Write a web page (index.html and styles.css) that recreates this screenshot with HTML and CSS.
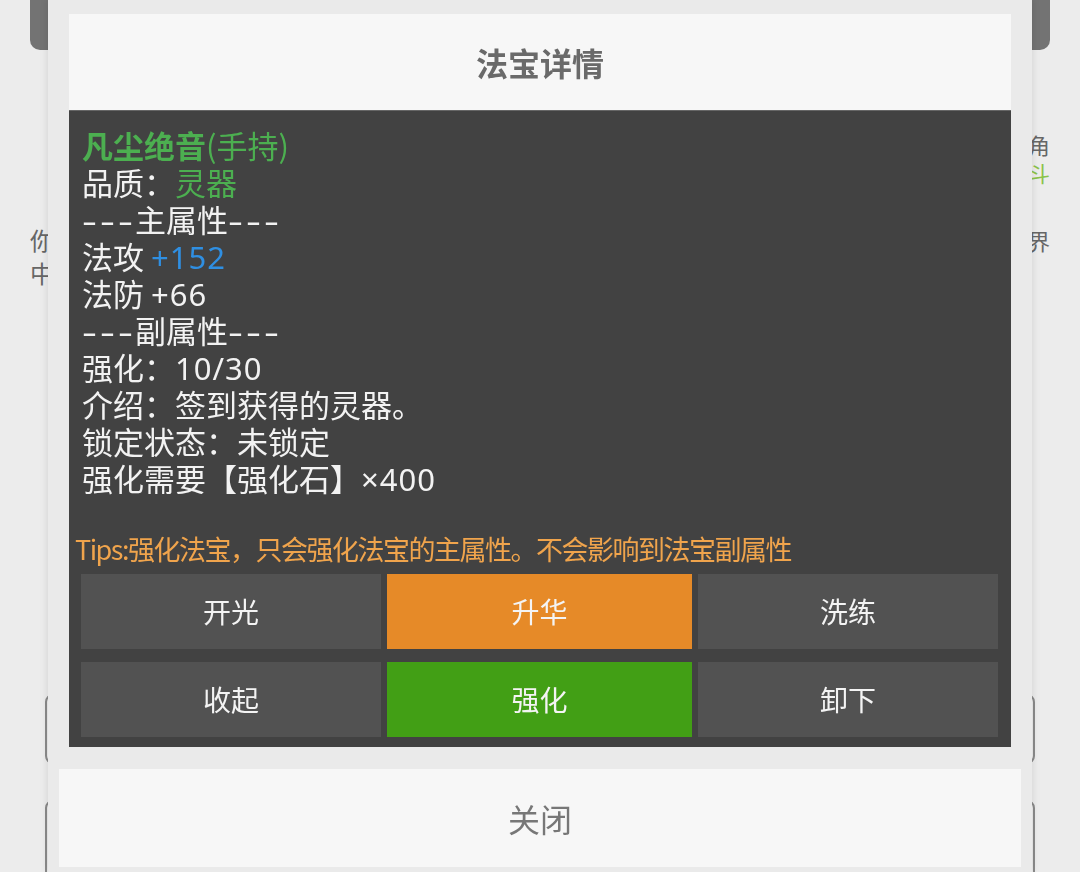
FILE: index.html
```html
<!DOCTYPE html>
<html>
<head>
    <title>法宝详情</title>
    <link rel="stylesheet" href="styles.css">
</head>
<body>
    <div class="page">
        <div class="topbar"></div>
        <div class="bg-content">
            <div class="bg-left">
                <div>你</div>
                <div>中</div>
            </div>
            <div class="bg-right">
                <div>角</div>
                <div class="bg-green">斗</div>
                <div class="bg-gap">界</div>
            </div>
        </div>
        <div class="bg-box"></div>
        <div class="bg-box bg-box-2"></div>
    </div>

    <div class="modal">
        <div class="modal-title">法宝详情</div>
        <div class="panel">
            <div class="detail">
                <div class="line name"><b>凡尘绝音</b>(手持)</div>
                <div class="line">品质：<span class="green">灵器</span></div>
                <div class="line"><span class="dash">---</span>主属性<span class="dash">---</span></div>
                <div class="line">法攻 <span class="en blue">+152</span></div>
                <div class="line">法防 <span class="en">+66</span></div>
                <div class="line"><span class="dash">---</span>副属性<span class="dash">---</span></div>
                <div class="line">强化：<span class="en">10/30</span></div>
                <div class="line">介绍：签到获得的灵器。</div>
                <div class="line">锁定状态：未锁定</div>
                <div class="line">强化需要【强化石】<span class="en">×400</span></div>
            </div>
            <div class="tips">Tips:强化法宝，只会强化法宝的主属性。不会影响到法宝副属性</div>
            <div class="actions">
                <div class="btn">开光</div>
                <div class="btn btn-orange">升华</div>
                <div class="btn">洗练</div>
                <div class="btn">收起</div>
                <div class="btn btn-green">强化</div>
                <div class="btn">卸下</div>
            </div>
        </div>
        <div class="close-btn">关闭</div>
    </div>
</body>
</html>
```

FILE: styles.css
```css
body {
    margin: 0;
    padding: 0;
    background-color: #ececec;
    font-family: "Noto Sans CJK SC", "Noto Sans", sans-serif;
    overflow: hidden;
}

/* page behind the dialog */
.page {
    height: 872px;
}
.topbar {
    margin: 0 30px;
    height: 50px;
    background-color: #737373;
    border-radius: 0 0 10px 10px;
}
.bg-content {
    display: flex;
    justify-content: space-between;
    padding: 0 30px;
    margin-top: 80px;
    font-size: 22px;
    color: #666;
}
.bg-left {
    margin-top: 93px;
    font-size: 24px;
    line-height: 33px;
}
.bg-right {
    line-height: 28px;
}
.bg-green {
    color: #8bc34a;
}
.bg-gap {
    margin-top: 40px;
}
.bg-box {
    margin: 405px 45px 0;
    height: 66px;
    border: 2px solid #8a8a8a;
    border-radius: 8px;
}
.bg-box-2 {
    margin-top: 36px;
    height: 90px;
}

/* dialog */
.modal {
    position: fixed;
    top: 0;
    bottom: 0;
    left: 48px;
    right: 48px;
    padding: 14px 21px 0;
    background-color: #eaeaea;
    box-shadow: 0 0 8px rgba(0, 0, 0, 0.12);
}
.modal-title {
    height: 96px;
    line-height: 96px;
    text-align: center;
    background-color: #f7f7f7;
    font-size: 32px;
    font-weight: bold;
    color: #6a6a6a;
}
.panel {
    background-color: #424242;
    border-top: 1px solid #666;
    padding: 15px 13px 10px 12px;
}
.detail {
    padding-left: 1px;
    font-size: 31px;
    line-height: 37px;
    color: #f2f2f2;
}
.line {
    height: 37px;
    white-space: nowrap;
}
.en {
    font-family: "Noto Sans", sans-serif;
    letter-spacing: 1px;
    line-height: 1;
}
.dash {
    display: inline-block;
    width: 53px;
    font-family: "Noto Sans", sans-serif;
    line-height: 1;
    letter-spacing: 2px;
    transform: scaleX(1.5);
    transform-origin: left center;
}
.name {
    color: #4caf50;
}
.name b {
    font-weight: bold;
}
.green {
    color: #4caf50;
}
.blue {
    color: #2f8fe2;
}
.tips {
    margin: 35px 0 0 -6px;
    font-size: 27px;
    line-height: 36px;
    color: #f0a44c;
    letter-spacing: -1.5px;
    white-space: nowrap;
}
.actions {
    display: grid;
    grid-template-columns: 300px 305px 300px;
    column-gap: 6px;
    row-gap: 13px;
    margin-top: 7px;
}
.btn {
    height: 75px;
    line-height: 75px;
    text-align: center;
    background-color: #525252;
    color: #f4f4f4;
    font-size: 28px;
}
.btn-orange {
    background-color: #e68a28;
}
.btn-green {
    background-color: #429f15;
}
.close-btn {
    margin: 22px -10px 0;
    height: 98px;
    line-height: 98px;
    text-align: center;
    background-color: #f7f7f7;
    font-size: 32px;
    color: #777;
}
```
